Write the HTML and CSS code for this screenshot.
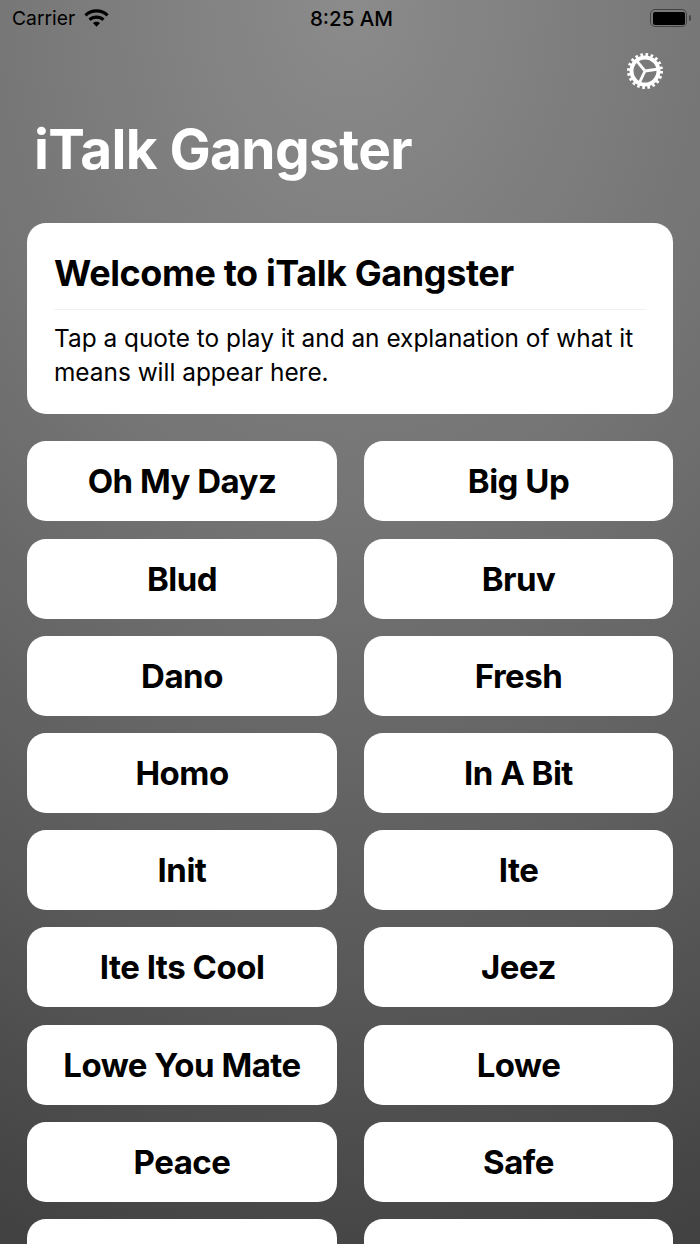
FILE: index.html
```html
<!DOCTYPE html>
<html lang="en">
<head>
    <meta charset="UTF-8">
    <meta name="viewport" content="width=device-width, initial-scale=1.0">
    <title>iTalk Gangster</title>
    <link rel="stylesheet" href="styles.css">
</head>
<body>
    <div class="screen">
        <div class="status-bar">
            <div class="status-left">
                <span>Carrier</span>
                <svg class="wifi" width="25" height="18" viewBox="1.500 0 23 16.800">
                    <path d="M13 3.2c3.6 0 6.9 1.4 9.4 3.7l1.9-2.1C21.3 2 17.3.3 13 .3S4.7 2 1.7 4.8l1.9 2.1C6.1 4.6 9.4 3.2 13 3.2z"/>
                    <path d="M13 9c2.1 0 4 .8 5.5 2.1l2-2.2C18.500 7.100 15.900 6 13 6S7.500 7.100 5.500 8.900l2 2.200C9 9.800 10.900 9 13 9z"/>
                    <path d="M13 11.800c-1.300 0-2.400.5-3.300 1.200l3.300 3.600 3.300-3.600c-.9-.7-2-1.200-3.300-1.200z"/>
                </svg>
            </div>
            <div class="status-time">8:25 AM</div>
            <div class="battery">
                <div class="battery-body"><div class="battery-fill"></div></div>
                <div class="battery-cap"></div>
            </div>
        </div>

        <div class="settings-row">
            <svg class="gear" width="38" height="38" viewBox="0 0 38 38">
                <circle cx="19" cy="19" r="13.500" fill="none" stroke="#fff" stroke-width="4"/>
                <circle cx="19" cy="19" r="16.500" fill="none" stroke="#fff" stroke-width="3" stroke-dasharray="2.600 2.584"/>
                <path d="M19 19L10.100 8.200M19 19L32.800 17M19 19L13 31.700" fill="none" stroke="#fff" stroke-width="2.800"/>
            </svg>
        </div>

        <h1 class="app-title">iTalk Gangster</h1>

        <div class="info-card">
            <h2 class="info-title">Welcome to iTalk Gangster</h2>
            <p class="info-text">Tap a quote to play it and an explanation of what it means will appear here.</p>
        </div>

        <div class="quotes">
            <button class="quote">Oh My Dayz</button>
            <button class="quote">Big Up</button>
            <button class="quote">Blud</button>
            <button class="quote">Bruv</button>
            <button class="quote">Dano</button>
            <button class="quote">Fresh</button>
            <button class="quote">Homo</button>
            <button class="quote">In A Bit</button>
            <button class="quote">Init</button>
            <button class="quote">Ite</button>
            <button class="quote">Ite Its Cool</button>
            <button class="quote">Jeez</button>
            <button class="quote">Lowe You Mate</button>
            <button class="quote">Lowe</button>
            <button class="quote">Peace</button>
            <button class="quote">Safe</button>
            <button class="quote"></button>
            <button class="quote"></button>
        </div>
    </div>
</body>
</html>
```

FILE: styles.css
```css
/* General page */
html, body {
    margin: 0;
    height: 100%;
}

body {
    font-family: Inter, "Liberation Sans", sans-serif;
    overflow: hidden;
}

.screen {
    height: 1244px;
    overflow: hidden;
    background: radial-gradient(ellipse 1000px 1300px at 50% 0, #8b8b8b 0%, #747474 40%, #595959 75%, #424242 100%);
}

/* Status bar */
.status-bar {
    display: grid;
    grid-template-columns: 1fr auto 1fr;
    align-items: center;
    height: 36px;
    padding: 0 9px 0 12px;
    color: #000;
    font-size: 19.300px;
}

.status-left {
    display: flex;
    align-items: center;
    gap: 9px;
}

.status-time {
    font-weight: 500;
    font-size: 20.500px;
}

.battery {
    display: flex;
    align-items: center;
    justify-content: flex-end;
    gap: 2px;
}

.battery-body {
    width: 37px;
    height: 18px;
    box-sizing: border-box;
    border: 1.500px solid #444;
    border-radius: 5px;
    padding: 1.500px;
}

.battery-fill {
    height: 100%;
    background: #000;
    border-radius: 2px;
}

.battery-cap {
    width: 2px;
    height: 6px;
    background: #444;
    border-radius: 0 2px 2px 0;
}

/* Settings */
.settings-row {
    display: flex;
    justify-content: flex-end;
    padding: 16px 36px 0 0;
    height: 38px;
}

/* Header */
.app-title {
    margin: 26px 0 0 34px;
    color: #fff;
    font-size: 55px;
    line-height: 66px;
    font-weight: 700;
    letter-spacing: -0.650px;
}

/* Welcome card */
.info-card {
    margin: 41px 27px 0;
    padding: 28px 27px 0;
    height: 191px;
    box-sizing: border-box;
    background: #fff;
    border-radius: 19px;
}

.info-title {
    margin: 0;
    padding-bottom: 13px;
    border-bottom: 1px solid #f0f0f3;
    font-size: 36px;
    line-height: 45px;
    font-weight: 700;
    letter-spacing: -0.400px;
    color: #000;
}

.info-text {
    margin: 11px 0 0;
    font-size: 24.400px;
    line-height: 34px;
    color: #000;
}

/* Quote buttons */
.quotes {
    display: grid;
    grid-template-columns: 310px 309px;
    grid-auto-rows: 80px;
    column-gap: 27px;
    row-gap: 17.200px;
    margin: 27.400px 27px 0;
}

.quote {
    background: #fff;
    border: none;
    border-radius: 19px;
    padding: 0;
    color: #000;
    font-family: inherit;
    font-size: 33px;
    font-weight: 700;
    letter-spacing: -0.500px;
}
```
